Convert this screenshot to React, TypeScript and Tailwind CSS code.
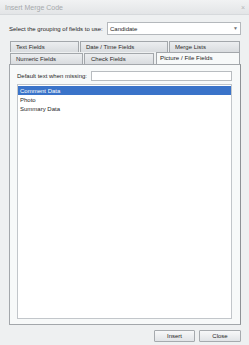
export default function App() {
  const items = ["Comment Data", "Photo", "Summary Data"];

  return (
    <div className="w-[249px] h-[345px] bg-[#eef0f1] flex flex-col overflow-hidden font-['Liberation_Sans',Arial,sans-serif] text-[6px] text-[#1e1e1e] leading-none">
      {/* title bar */}
      <div className="h-[15px] shrink-0 flex items-center justify-between pl-[5px] pr-[4px] bg-gradient-to-b from-[#f1f2f3] to-[#e3e5e7] border-b border-[#d6d9dc]">
        <span className="text-[7px] text-[#a6a9ac]">Insert Merge Code</span>
        <span className="text-[7px] text-[#b4b7ba]">×</span>
      </div>

      <div className="flex-1 flex flex-col pl-[9px] pr-[8px]">
        {/* grouping select */}
        <div className="mt-[7px] h-[13px] flex items-center">
          <span className="w-[98px] shrink-0">Select the grouping of fields to use:</span>
          <div className="flex-1 h-[13px] bg-white border border-[#b4b8bc] flex items-center justify-between pl-[2px] pr-[2px]">
            <span>Candidate</span>
            <span className="text-[5px] text-[#707478]">▼</span>
          </div>
        </div>

        {/* tabs */}
        <div className="mt-[6px] pl-[1px] pr-[1px] flex flex-col">
          <div className="flex gap-[1px] h-[11px]">
            <Tab label="Text Fields" w="w-[69px]" />
            <Tab label="Date / Time Fields" w="w-[88px]" />
            <Tab label="Merge Lists" w="w-[71px]" />
          </div>
          <div className="flex gap-[1px] h-[11px] mt-[1px] items-start">
            <Tab label="Numeric Fields" w="w-[73px]" />
            <Tab label="Check Fields" w="w-[70px]" pl="pl-[6px]" />
            <div className="w-[85px] h-[12px] -mt-[1px] ml-[1px] relative z-10 bg-[#f7f9f9] border border-b-0 border-[#a3a7ab] flex items-center pl-[3px] text-[6.2px]">
              Picture / File Fields
            </div>
          </div>
        </div>

        {/* tab panel */}
        <div className="h-[261px] bg-[#f7f9f9] border border-[#a3a7ab] border-r-[#8e9296] flex flex-col pl-[7px] pr-[8px]">
          <div className="mt-[6px] h-[10px] flex items-center">
            <span className="w-[74px] shrink-0">Default text when missing:</span>
            <div className="flex-1 h-[10px] bg-white border border-[#b8bcc0]" />
          </div>
          <div className="mt-[3px] h-[235px] bg-white border border-[#c2c6ca] flex flex-col pt-[1px]">
            {items.map((item, i) => (
              <div
                key={item}
                className={
                  i === 0
                    ? "h-[9px] flex items-center pl-[2px] bg-[#3a73c9] text-white"
                    : "h-[9px] flex items-center pl-[2px]"
                }
              >
                {item}
              </div>
            ))}
          </div>
        </div>

        {/* buttons */}
        <div className="mt-[5px] flex justify-end gap-[4px]">
          <Button label="Insert" w="w-[41px]" />
          <Button label="Close" w="w-[42px]" />
        </div>
      </div>
    </div>
  );
}

function Tab({ label, w, pl = "pl-[5px]" }: { label: string; w: string; pl?: string }) {
  return (
    <div
      className={`${w} ${pl} h-[11px] shrink-0 flex items-center bg-gradient-to-b from-[#eceef0] to-[#d9dcdf] border border-b-0 border-[#a3a7ab] text-[#2a2a2a]`}
    >
      {label}
    </div>
  );
}

function Button({ label, w }: { label: string; w: string }) {
  return (
    <div
      className={`${w} h-[12px] flex items-center justify-center bg-gradient-to-b from-[#f7f8f9] to-[#e1e4e7] border border-[#a6aaae] rounded-[1px]`}
    >
      {label}
    </div>
  );
}
